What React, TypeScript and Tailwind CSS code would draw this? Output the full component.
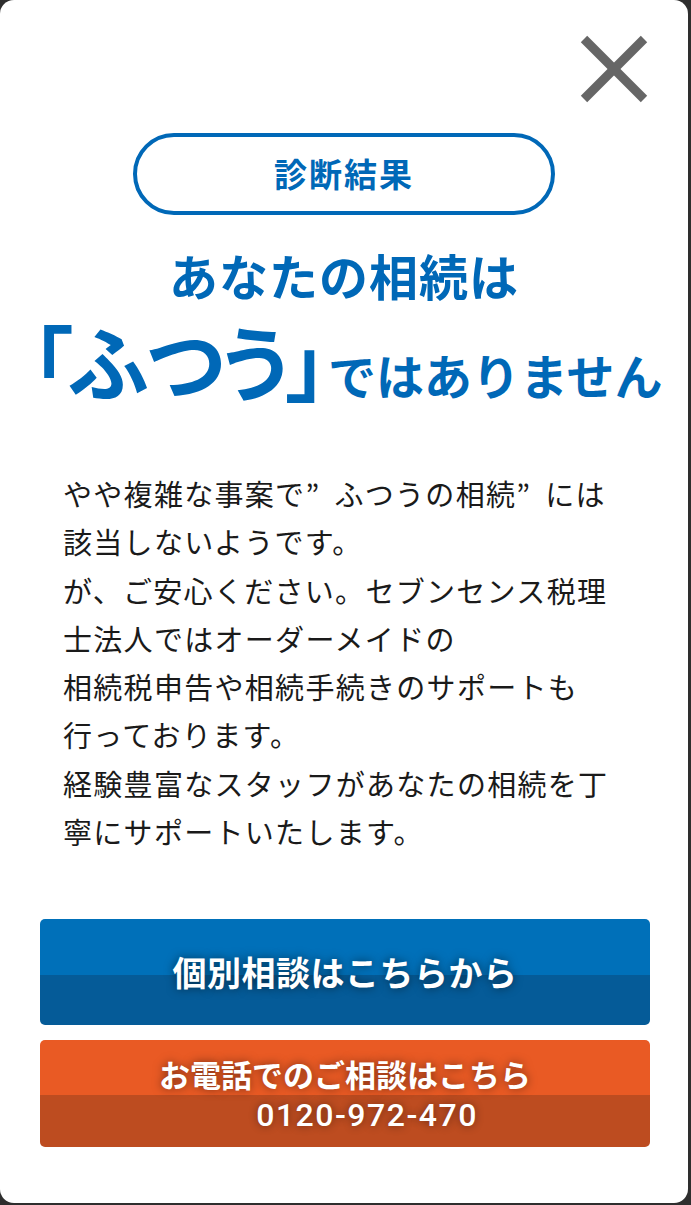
import React from 'react';

const jp = "font-['Noto_Sans_CJK_JP','Noto_Sans',sans-serif]";

const CloseIcon = () => (
  <svg width="68" height="68" viewBox="0 0 68 68" aria-hidden="true">
    <line x1="4" y1="4" x2="64" y2="64" stroke="#666666" strokeWidth="9" />
    <line x1="64" y1="4" x2="4" y2="64" stroke="#666666" strokeWidth="9" />
  </svg>
);

// 全角の閉じ引用符の後ろの余白
const Quote = () => <span className="mr-[14px]">”</span>;

export default function App() {
  return (
    <div className="w-[691px] h-[1205px] bg-[#2e2e2e] overflow-hidden">
      <div className={`relative w-[688px] h-[1203px] bg-white rounded-[14px] ${jp}`}>
        {/* 閉じるボタン */}
        <button className="absolute top-[35px] left-[580px]" aria-label="閉じる">
          <CloseIcon />
        </button>

        <div className="flex flex-col items-center pt-[133px]">
          <div className="w-[422px] h-[82px] rounded-full border-[4px] border-[#0068b7] flex items-center justify-center">
            <span className="text-[33px] font-bold text-[#0068b7] leading-none tracking-[2px] -mt-[2px]">診断結果</span>
          </div>

          <h1 className="mt-[30px] text-[#0068b7] font-bold text-center">
            <span className="block text-[49px] leading-[60px] tracking-[1px]">あなたの相続は</span>
            <span className="flex items-baseline justify-center mt-[14px] ml-[6px] leading-none whitespace-nowrap">
              <span className="text-[82px] tracking-[-3px] [font-feature-settings:'palt']">「ふつう」</span>
              <span className="text-[48px] tracking-[0px] ml-[4px]">ではありません</span>
            </span>
          </h1>
        </div>

        <p className="mt-[68px] ml-[63px] text-[29px] leading-[48.3px] tracking-[1.3px] text-[#1a1a1a] whitespace-nowrap">
          やや複雑な事案で<Quote />ふつうの相続<Quote />には<br />
          該当しないようです。<br />
          が、ご安心ください。セブンセンス税理<br />
          士法人ではオーダーメイドの<br />
          相続税申告や相続手続きのサポートも<br />
          行っております。<br />
          経験豊富なスタッフがあなたの相続を丁<br />
          寧にサポートいたします。
        </p>

        <div className="mt-[64px] ml-[40px] w-[610px] flex flex-col gap-[15px]">
          <a className="relative block h-[106px] rounded-[5px] overflow-hidden">
            <div className="flex flex-col h-full">
              <div className="h-[56px] bg-[#0070b9]" />
              <div className="flex-1 bg-[#055b98]" />
            </div>
            <div className="absolute inset-0 flex items-center justify-center">
              <span className="text-white text-[34px] font-bold leading-none tracking-[0.5px] [text-shadow:0_0_10px_rgba(0,0,0,0.55)]">
                個別相談はこちらから
              </span>
            </div>
          </a>

          <a className="relative block h-[107px] rounded-[5px] overflow-hidden">
            <div className="flex flex-col h-full">
              <div className="h-[55px] bg-[#e95a24]" />
              <div className="flex-1 bg-[#bd4c20]" />
            </div>
            <div className="absolute inset-0 flex flex-col items-center pt-[18px]">
              <span className="text-white text-[31px] font-bold leading-none [text-shadow:0_0_10px_rgba(0,0,0,0.5)]">
                お電話でのご相談はこちら
              </span>
              <span className="mt-[10px] ml-[44px] text-white text-[32px] font-medium leading-none tracking-[1.5px] font-['Roboto','Liberation_Sans',sans-serif] [text-shadow:0_0_8px_rgba(0,0,0,0.45)]">
                0120-972-470
              </span>
            </div>
          </a>
        </div>
      </div>
    </div>
  );
}
